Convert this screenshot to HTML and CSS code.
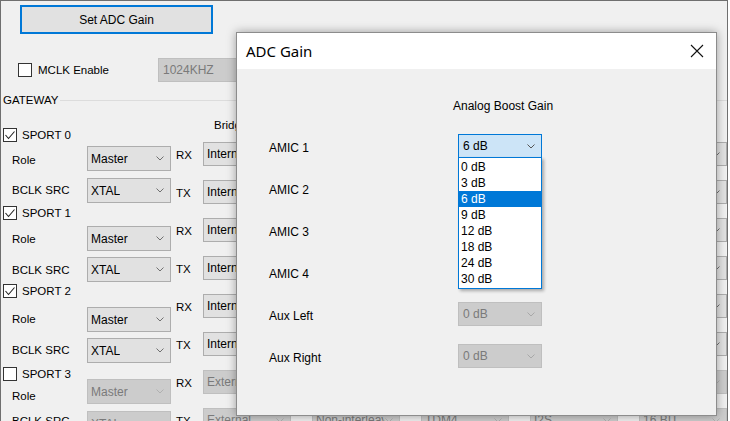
FILE: index.html
```html
<!DOCTYPE html>
<html>
<head>
<meta charset="utf-8">
<link rel="stylesheet" href="styles.css">
</head>
<body>
<div class="app">
  <div class="toolbar"><button class="btn-focus">Set ADC Gain</button></div>

  <div class="mclk-row">
    <label class="check check-mclk"><span class="box"></span><span>MCLK Enable</span></label>
    <div class="combo combo-off combo-mclk"><span class="ctext">1024KHZ</span></div>
  </div>

  <div class="group-title"><span>GATEWAY</span><span class="rule"></span></div>

  <div class="gateway">
    <div class="col-labels">
      <label class="check cb-row"><span class="box"><svg width="12" height="12" viewBox="0 0 12 12"><polyline points="1.5,6 4.5,9.5 10.5,2.5" fill="none" stroke="#222" stroke-width="1.1"/></svg></span><span>SPORT 0</span></label>
      <div class="field-label">Role</div>
      <div class="field-label">BCLK SRC</div>
      <label class="check cb-row"><span class="box"><svg width="12" height="12" viewBox="0 0 12 12"><polyline points="1.5,6 4.5,9.5 10.5,2.5" fill="none" stroke="#222" stroke-width="1.1"/></svg></span><span>SPORT 1</span></label>
      <div class="field-label">Role</div>
      <div class="field-label">BCLK SRC</div>
      <label class="check cb-row"><span class="box"><svg width="12" height="12" viewBox="0 0 12 12"><polyline points="1.5,6 4.5,9.5 10.5,2.5" fill="none" stroke="#222" stroke-width="1.1"/></svg></span><span>SPORT 2</span></label>
      <div class="field-label">Role</div>
      <div class="field-label">BCLK SRC</div>
      <label class="check cb-row"><span class="box"></span><span>SPORT 3</span></label>
      <div class="field-label">Role</div>
      <div class="field-label">BCLK SRC</div>
    </div>

    <div class="col-combos">
      <div class="combo combo-side"><span class="ctext">Master</span><svg class="chev" width="8" height="5" viewBox="0 0 8 5"><polyline points="0.5,0.5 4,4 7.5,0.5" fill="none" stroke="#707070"/></svg></div>
      <div class="combo combo-side"><span class="ctext">XTAL</span><svg class="chev" width="8" height="5" viewBox="0 0 8 5"><polyline points="0.5,0.5 4,4 7.5,0.5" fill="none" stroke="#707070"/></svg></div>
      <div class="combo combo-side"><span class="ctext">Master</span><svg class="chev" width="8" height="5" viewBox="0 0 8 5"><polyline points="0.5,0.5 4,4 7.5,0.5" fill="none" stroke="#707070"/></svg></div>
      <div class="combo combo-side"><span class="ctext">XTAL</span><svg class="chev" width="8" height="5" viewBox="0 0 8 5"><polyline points="0.5,0.5 4,4 7.5,0.5" fill="none" stroke="#707070"/></svg></div>
      <div class="combo combo-side"><span class="ctext">Master</span><svg class="chev" width="8" height="5" viewBox="0 0 8 5"><polyline points="0.5,0.5 4,4 7.5,0.5" fill="none" stroke="#707070"/></svg></div>
      <div class="combo combo-side"><span class="ctext">XTAL</span><svg class="chev" width="8" height="5" viewBox="0 0 8 5"><polyline points="0.5,0.5 4,4 7.5,0.5" fill="none" stroke="#707070"/></svg></div>
      <div class="combo combo-side combo-off"><span class="ctext">Master</span><svg class="chev" width="8" height="5" viewBox="0 0 8 5"><polyline points="0.5,0.5 4,4 7.5,0.5" fill="none" stroke="#b0b0b0"/></svg></div>
      <div class="combo combo-side combo-off"><span class="ctext">XTAL</span><svg class="chev" width="8" height="5" viewBox="0 0 8 5"><polyline points="0.5,0.5 4,4 7.5,0.5" fill="none" stroke="#b0b0b0"/></svg></div>
    </div>

    <div class="col-bridge">
      <div class="bridge-head"><span class="bh">Bridge</span><span class="bh">Interleave</span><span class="bh">Mode</span><span class="bh">Format</span><span class="bh">Width</span></div>
      <div class="bridge-rows" id="bridgeRows"></div>
    </div>
  </div>

  <div class="dialog">
    <div class="titlebar">
      <span class="title">ADC Gain</span>
      <svg class="close" width="14" height="14" viewBox="0 0 14 14"><path d="M1 1 L13 13 M13 1 L1 13" stroke="#111" stroke-width="1.1" fill="none"/></svg>
    </div>
    <div class="dlg-body">
      <div class="dlg-heading">Analog Boost Gain</div>
      <div class="dlg-grid">
        <div class="dlg-label">AMIC 1</div>
        <div class="dd-wrap">
          <div class="combo combo-dlg combo-open"><span class="ctext">6 dB</span><svg class="chev" width="8" height="5" viewBox="0 0 8 5"><polyline points="0.5,0.5 4,4 7.5,0.5" fill="none" stroke="#555"/></svg></div>
          <ul class="dd-list">
            <li>0 dB</li>
            <li>3 dB</li>
            <li class="sel">6 dB</li>
            <li>9 dB</li>
            <li>12 dB</li>
            <li>18 dB</li>
            <li>24 dB</li>
            <li>30 dB</li>
          </ul>
        </div>
        <div class="dlg-label">AMIC 2</div>
        <div class="combo combo-dlg"><svg class="chev" width="8" height="5" viewBox="0 0 8 5"><polyline points="0.5,0.5 4,4 7.5,0.5" fill="none" stroke="#707070"/></svg></div>
        <div class="dlg-label">AMIC 3</div>
        <div class="combo combo-dlg"><svg class="chev" width="8" height="5" viewBox="0 0 8 5"><polyline points="0.5,0.5 4,4 7.5,0.5" fill="none" stroke="#707070"/></svg></div>
        <div class="dlg-label">AMIC 4</div>
        <div class="combo combo-dlg"><svg class="chev" width="8" height="5" viewBox="0 0 8 5"><polyline points="0.5,0.5 4,4 7.5,0.5" fill="none" stroke="#707070"/></svg></div>
        <div class="dlg-label">Aux Left</div>
        <div class="combo combo-dlg combo-off"><span class="ctext">0 dB</span><svg class="chev" width="8" height="5" viewBox="0 0 8 5"><polyline points="0.5,0.5 4,4 7.5,0.5" fill="none" stroke="#a8a8a8"/></svg></div>
        <div class="dlg-label">Aux Right</div>
        <div class="combo combo-dlg combo-off"><span class="ctext">0 dB</span><svg class="chev" width="8" height="5" viewBox="0 0 8 5"><polyline points="0.5,0.5 4,4 7.5,0.5" fill="none" stroke="#a8a8a8"/></svg></div>
      </div>
    </div>
  </div>
</div>
<script src="app.js"></script>
</body>
</html>
```

FILE: app.js
```js
(function () {
  var rows = document.getElementById('bridgeRows');
  var on = ['Internal', 'Non-interleaved', 'TDM4', 'I2S', '16 BIT'];
  var off = ['External', 'Non-interleaved', 'TDM4', 'I2S', '16 BIT'];
  var chev = function (c) {
    return '<svg class="chev" width="8" height="5" viewBox="0 0 8 5"><polyline points="0.5,0.5 4,4 7.5,0.5" fill="none" stroke="' + c + '"/></svg>';
  };
  var html = '';
  for (var i = 0; i < 8; i++) {
    var disabled = i >= 6;
    var vals = disabled ? off : on;
    html += '<div class="bridge-row"><span class="io">' + (i % 2 === 0 ? 'RX' : 'TX') + '</span>';
    for (var j = 0; j < vals.length; j++) {
      html += '<div class="combo combo-bridge' + (disabled ? ' combo-off' : '') + '"><span class="ctext">' + vals[j] + '</span>' + chev(disabled ? '#b0b0b0' : '#707070') + '</div>';
    }
    html += '</div>';
  }
  rows.innerHTML = html;
})();
```

FILE: styles.css
```css
* { box-sizing: border-box; }

body {
  margin: 0;
  background: #ffffff;
  font-family: "Liberation Sans", Arial, sans-serif;
  font-size: 11.5px;
  color: #000;
}

.app {
  position: relative;
  width: 728px;
  height: 421px;
  background: #f0f0f0;
  border: 1px solid #6f6f6f;
  border-bottom: none;
  overflow: hidden;
}

/* toolbar */
.toolbar { padding: 4px 0 0 19px; }

.btn-focus {
  display: flex;
  align-items: center;
  justify-content: center;
  width: 193px;
  height: 29px;
  margin: 0;
  padding: 0;
  border: 2px solid #0078d7;
  background: #e1e1e1;
  font-family: "Liberation Sans", Arial, sans-serif;
  font-size: 12px;
  color: #000;
}

/* checkbox */
.check {
  display: flex;
  align-items: center;
  gap: 5px;
  white-space: nowrap;
}
.box {
  display: flex;
  align-items: center;
  justify-content: center;
  width: 14px;
  height: 14px;
  flex: none;
  background: #fff;
  border: 1px solid #333;
}

.mclk-row {
  display: flex;
  align-items: center;
  height: 24px;
  margin-top: 24px;
  padding-left: 17px;
}
.check-mclk { width: 140px; gap: 6px; }

/* combos */
.combo {
  display: flex;
  align-items: center;
  height: 25px;
  padding: 0 6px 0 3px;
  background: #e1e1e1;
  border: 1px solid #adadad;
  font-size: 12px;
  color: #000;
  white-space: nowrap;
  overflow: hidden;
  flex: none;
}
.combo .ctext { overflow: hidden; }
.combo .chev { margin-left: auto; flex: none; }
.combo-off {
  background: #cccccc;
  border-color: #bfbfbf;
  color: #7a7a7a;
}
.combo-mclk { width: 120px; height: 24px; padding-left: 4px; }

/* group title */
.group-title {
  display: flex;
  align-items: center;
  height: 14px;
  margin-top: 11px;
  padding-left: 2px;
}
.group-title .rule {
  flex: 1;
  height: 1px;
  margin-left: 2px;
  background: #dcdcdc;
}

/* gateway area */
.gateway { display: flex; }

.col-labels {
  width: 87px;
  padding-top: 20px;
  display: grid;
  grid-template-rows: 25px 30px 23px 26px 31px 21px 28px 31px 24px 22px 25px 14px;
  align-items: start;
}
.cb-row { height: 15px; padding-left: 2px; }
.field-label { height: 16px; line-height: 16px; padding-left: 11px; white-space: nowrap; }

.col-combos {
  width: 90px;
  padding-top: 39px;
  display: grid;
  grid-template-rows: 32px 48px 31px 50px 31px 41px 32px 24px;
  align-items: start;
}
.combo-side { width: 84px; }

.col-bridge { flex: 1; padding-top: 11px; }
.bridge-head {
  display: flex;
  height: 14px;
  line-height: 14px;
  padding-left: 38px;
  gap: 50px;
}
.bridge-rows {
  display: flex;
  flex-direction: column;
  gap: 14px;
  margin-top: 10px;
}
.bridge-row {
  display: flex;
  align-items: center;
  height: 24px;
  gap: 21px;
}
.bridge-row .io { width: 27px; margin-right: -21px; padding-top: 2px; }
.combo-bridge { width: 88px; height: 24px; }

/* dialog */
.dialog {
  position: absolute;
  left: 235px;
  top: 31px;
  width: 481px;
  height: 384px;
  background: #f0f0f0;
  border: 1px solid #8c8c8c;
  box-shadow: 0 0 9px rgba(0, 0, 0, 0.35);
  font-size: 12px;
}
.titlebar {
  display: flex;
  align-items: center;
  justify-content: space-between;
  height: 36px;
  padding: 0 12px 0 9px;
  background: #ffffff;
}
.title {
  font-family: "Noto Sans", "Liberation Sans", sans-serif;
  font-size: 15px;
  color: #000;
}

.dlg-body { padding: 30px 0 0 32px; }
.dlg-heading {
  height: 14px;
  line-height: 14px;
  padding-left: 184px;
}
.dlg-grid {
  margin-top: 21px;
  display: grid;
  grid-template-columns: 189px 84px;
  grid-auto-rows: 24px;
  row-gap: 18px;
  align-items: center;
}
.dlg-label { line-height: 14px; padding-top: 4px; }
.combo-dlg { width: 84px; height: 24px; padding: 0 6px 0 4px; }
.combo-open { background: #cce4f7; border-color: #0078d7; }

.dd-wrap { position: relative; height: 24px; }
.dd-list {
  position: absolute;
  top: 23px;
  left: 0;
  width: 84px;
  margin: 0;
  padding: 1px 0;
  list-style: none;
  background: #ffffff;
  border: 1px solid #0078d7;
  box-shadow: 2px 2px 3px rgba(0, 0, 0, 0.3);
  z-index: 2;
}
.dd-list li {
  height: 16px;
  line-height: 16px;
  padding-left: 2px;
  font-size: 12px;
}
.dd-list li.sel { background: #0078d7; color: #ffffff; }
```
